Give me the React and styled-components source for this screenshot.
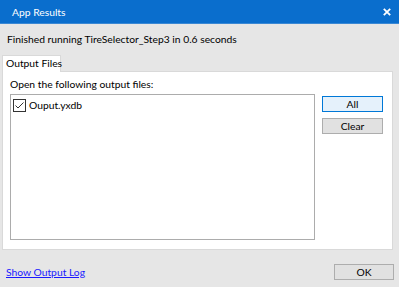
import React from "react";
import styled, { createGlobalStyle } from "styled-components";

const Global = createGlobalStyle`
  html, body { margin: 0; padding: 0; }
  body { width: 399px; height: 287px; overflow: hidden; background: #e6e6e6; }
  * { box-sizing: border-box; }
`;

const Dialog = styled.div`
  width: 399px;
  height: 287px;
  display: flex;
  flex-direction: column;
  background: #e6e6e6;
  font-family: Lato, "Liberation Sans", sans-serif;
  font-size: 10.3px;
  color: #000;
`;

const TitleBar = styled.div`
  height: 24px;
  background: #0a6ecd;
  border-bottom: 1px solid #3a88d4;
  display: flex;
  align-items: center;
  justify-content: space-between;
  padding: 0 8px 0 12px;
  color: #fff;
`;

const Title = styled.span`
  font-size: 10.3px;
  line-height: 16px;
`;

const CloseIcon = styled.svg`
  width: 8px;
  height: 8px;
`;

const Status = styled.div`
  padding: 7px 7px 0 7px;
  height: 31px;
  line-height: 16px;
`;

const TabStrip = styled.div`
  display: flex;
  padding-left: 2px;
`;

const Tab = styled.div`
  width: 59px;
  height: 17px;
  background: #fff;
  border: 1px solid #d9d9d9;
  border-bottom: none;
  line-height: 15px;
  padding-left: 3px;
  white-space: nowrap;
  margin-bottom: -1px;
  position: relative;
  z-index: 1;
`;

const Panel = styled.div`
  margin: 0 6px 0 2px;
  height: 179px;
  background: #fff;
  border: 1px solid #d9d9d9;
  padding: 4px 7px 9px 7px;
  display: flex;
  flex-direction: column;
`;

const Label = styled.div`
  line-height: 16px;
  height: 18px;
`;

const PanelBody = styled.div`
  flex: 1;
  display: flex;
  gap: 7px;
`;

const ListBox = styled.div`
  width: 305px;
  border: 1px solid #acacac;
  padding: 3px 2px;
`;

const Item = styled.label`
  display: flex;
  align-items: center;
  gap: 3px;
  line-height: 14px;
`;

const Check = styled.svg`
  width: 13px;
  height: 13px;
  flex: none;
`;

const ButtonColumn = styled.div`
  display: flex;
  flex-direction: column;
  gap: 6px;
  padding-top: 2px;
`;

const Button = styled.button`
  width: ${(p) => p.$w || 61}px;
  height: 16px;
  padding: 0;
  font-family: inherit;
  font-size: 10.3px;
  line-height: 14px;
  color: #000;
  background: ${(p) => (p.$default ? "#e5f1fb" : "#e1e1e1")};
  border: 1px solid ${(p) => (p.$default ? "#0078d7" : "#adadad")};
  border-radius: 0;
`;

const Footer = styled.div`
  flex: 1;
  display: flex;
  align-items: center;
  justify-content: space-between;
  padding: 6px 5px 0 6px;
`;

const Link = styled.a`
  color: #1a1aff;
  text-decoration: underline;
  line-height: 16px;
`;

export default function App() {
  return (
    <>
      <Global />
      <Dialog>
        <TitleBar>
          <Title>App Results</Title>
          <CloseIcon viewBox="0 0 8 8">
            <path d="M0.8 0.8 L7.2 7.2 M7.2 0.8 L0.8 7.2" stroke="#fff" strokeWidth="1.8" />
          </CloseIcon>
        </TitleBar>
        <Status>Finished running TireSelector_Step3 in 0.6 seconds</Status>
        <TabStrip>
          <Tab>Output Files</Tab>
        </TabStrip>
        <Panel>
          <Label>Open the following output files:</Label>
          <PanelBody>
            <ListBox>
              <Item>
                <Check viewBox="0 0 13 13">
                  <rect x="0.5" y="0.5" width="12" height="12" fill="#fff" stroke="#333" />
                  <path d="M2.5 6.5 L5 9 L10.5 3.5" fill="none" stroke="#333" strokeWidth="1" />
                </Check>
                Ouput.yxdb
              </Item>
            </ListBox>
            <ButtonColumn>
              <Button $default>All</Button>
              <Button>Clear</Button>
            </ButtonColumn>
          </PanelBody>
        </Panel>
        <Footer>
          <Link href="#">Show Output Log</Link>
          <Button $w={60}>OK</Button>
        </Footer>
      </Dialog>
    </>
  );
}
